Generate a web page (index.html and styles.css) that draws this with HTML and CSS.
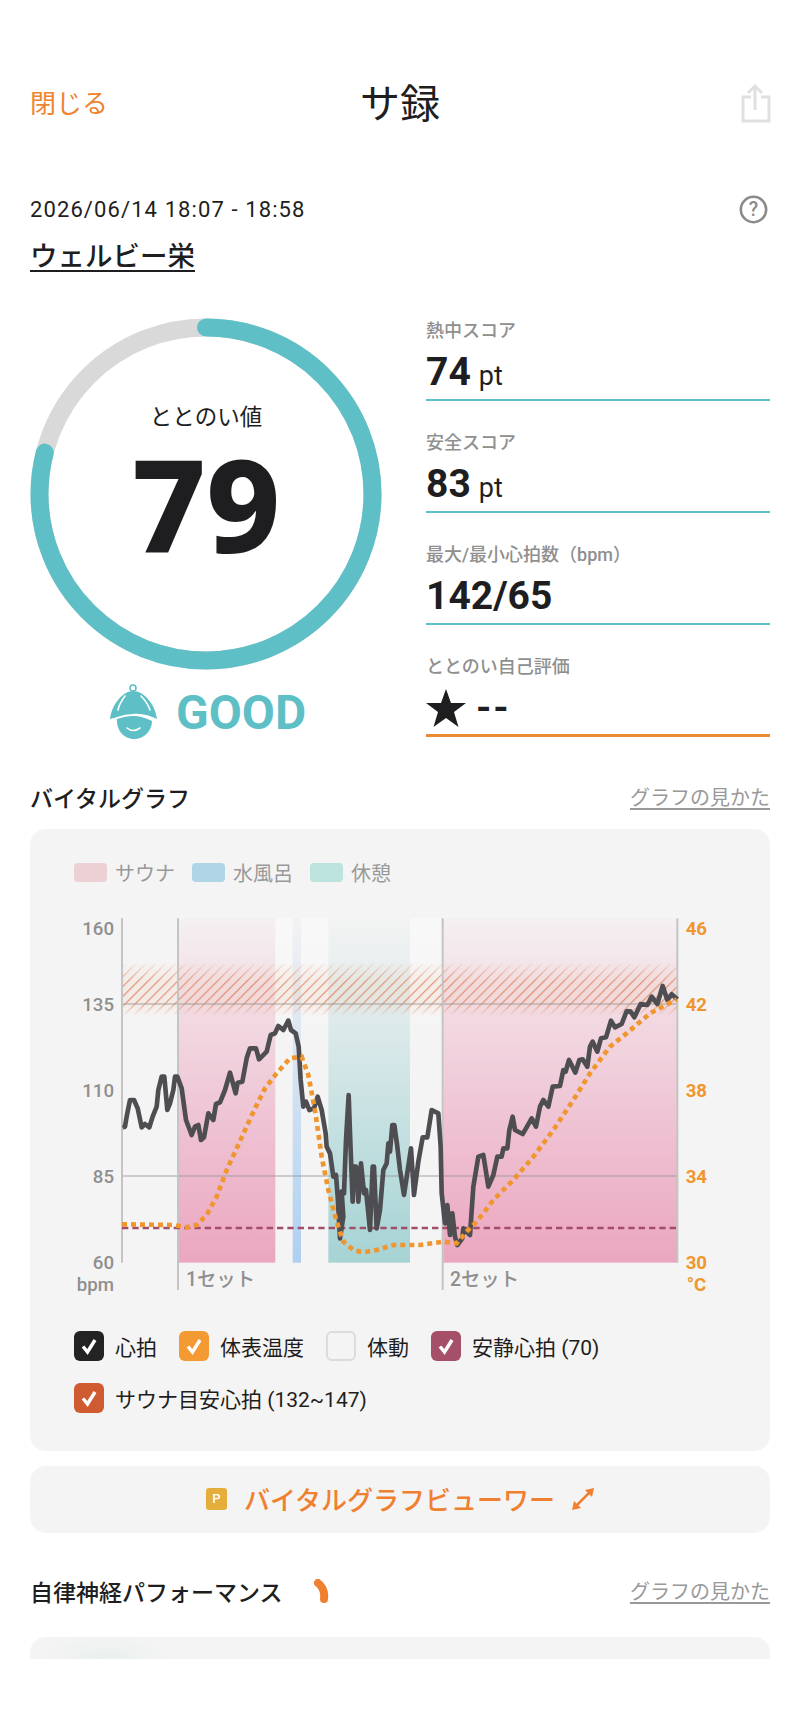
FILE: index.html
```html
<!DOCTYPE html>
<html lang="ja">

<head>
    <meta charset="UTF-8">
    <meta name="viewport" content="width=device-width, initial-scale=1.0">
    <title>サ録</title>
    <link rel="stylesheet" href="styles.css">
</head>

<body>
    <div class="topbar">
        <a class="close-link">閉じる</a>
        <h1>サ録</h1>
        <svg class="share-icon" viewBox="0 0 30 40">
            <path d="M10 14H2V38H28V14H20" />
            <path d="M14 27V3M7 10L14 3L21 10" />
        </svg>
    </div>

    <div class="date-row">
        <span>2026/06/14 18:07 - 18:58</span>
        <svg class="help-icon" viewBox="0 0 27 27">
            <circle cx="13.5" cy="13.5" r="11.8" />
            <text x="13.5" y="20">?</text>
        </svg>
    </div>
    <div class="venue">ウェルビー栄</div>

    <div class="score-row">
        <div class="ring-col">
            <div class="ring">
                <svg viewBox="0 0 352 352">
                    <circle class="ring-track" cx="176" cy="176" r="166.5" />
                    <circle class="ring-value" cx="176" cy="176" r="166.5" pathLength="100" stroke-dasharray="79 100" transform="rotate(-90 176 176)" />
                </svg>
                <div class="ring-label">ととのい値</div>
                <div class="ring-number">79</div>
            </div>
            <div class="grade">
                <svg class="grade-icon" viewBox="10 8 48 56">
                    <circle class="hat-loop" cx="33" cy="12" r="3" />
                    <path d="M10 43C12 28 23 15 33 15C44 15 55 28 57 43C50 40 42 37 33 38C25 38 18 41 10 43Z" />
                    <path d="M17 43C23 41 28 40 33 40C40 40 46 42 52 45C52 55 44 63 34 63C24 63 16 54 17 43Z" />
                    <path class="hat-line" d="M25 20C22 24 19 28 18 34M41 20C45 24 48 28 50 34" />
                    <path class="hat-line" d="M27 52Q33 57 40 52" />
                </svg>
                <span>GOOD</span>
            </div>
        </div>

        <div class="stats">
            <div class="stat">
                <div class="stat-label">熱中スコア</div>
                <div class="stat-value">74 <small>pt</small></div>
            </div>
            <div class="stat">
                <div class="stat-label">安全スコア</div>
                <div class="stat-value">83 <small>pt</small></div>
            </div>
            <div class="stat">
                <div class="stat-label">最大/最小心拍数（bpm）</div>
                <div class="stat-value">142/65</div>
            </div>
            <div class="stat stat-self">
                <div class="stat-label">ととのい自己評価</div>
                <div class="stat-value">
                    <svg class="star" viewBox="0 0 40 38">
                        <polygon points="20,0 25,14 40,14 28,23 32.5,38 20,29 7.5,38 12,23 0,14 15,14" />
                    </svg>
                    <span class="dashes">--</span>
                </div>
            </div>
        </div>
    </div>

    <div class="section-head">
        <h2>バイタルグラフ</h2>
        <a class="guide-link">グラフの見かた</a>
    </div>

    <div class="card graph-card">
        <div class="band-legend">
            <span class="swatch swatch-sauna"></span><span>サウナ</span>
            <span class="swatch swatch-water"></span><span>水風呂</span>
            <span class="swatch swatch-rest"></span><span>休憩</span>
        </div>

        <!-- viewBox is 3x the real pixels -->
        <svg class="chart" viewBox="0 0 1980 1200">
            <defs>
                <linearGradient id="saunaFill" x1="0" y1="0" x2="0" y2="1">
                    <stop offset="0" stop-color="#eba6c0" stop-opacity="0.05" />
                    <stop offset="0.3" stop-color="#eba6c0" stop-opacity="0.36" />
                    <stop offset="1" stop-color="#eba6c0" />
                </linearGradient>
                <linearGradient id="waterFill" x1="0" y1="0" x2="0" y2="1">
                    <stop offset="0" stop-color="#b0d0f0" stop-opacity="0.05" />
                    <stop offset="1" stop-color="#b0d0f0" />
                </linearGradient>
                <linearGradient id="restFill" x1="0" y1="0" x2="0" y2="1">
                    <stop offset="0" stop-color="#a6d3d4" stop-opacity="0.03" />
                    <stop offset="0.3" stop-color="#a6d3d4" stop-opacity="0.3" />
                    <stop offset="1" stop-color="#a6d3d4" />
                </linearGradient>
                <linearGradient id="gapFill" x1="0" y1="0" x2="0" y2="1">
                    <stop offset="0" stop-color="#ffffff" stop-opacity="0.4" />
                    <stop offset="1" stop-color="#ffffff" stop-opacity="0" />
                </linearGradient>
                <linearGradient id="hatchFade" x1="0" y1="0" x2="0" y2="1">
                    <stop offset="0" stop-color="#fff" stop-opacity="0.1" />
                    <stop offset="0.35" stop-color="#fff" />
                    <stop offset="0.75" stop-color="#fff" />
                    <stop offset="1" stop-color="#fff" stop-opacity="0.1" />
                </linearGradient>
                <pattern id="hatch" width="21" height="21" patternUnits="userSpaceOnUse" patternTransform="rotate(-45)">
                    <line x1="0" y1="2" x2="21" y2="2" class="hatch-line" />
                </pattern>
                <mask id="hatchMask">
                    <rect x="186" y="190" width="1666" height="155" fill="url(#hatchFade)" />
                </mask>
            </defs>

            <rect x="354" y="55" width="292" height="1033" fill="url(#saunaFill)" />
            <rect x="698" y="55" width="25" height="1033" fill="url(#waterFill)" />
            <rect x="805" y="55" width="245" height="1033" fill="url(#restFill)" />
            <rect x="1150" y="55" width="702" height="1033" fill="url(#saunaFill)" />
            <rect x="646" y="55" width="52" height="380" fill="url(#gapFill)" />
            <rect x="723" y="55" width="82" height="380" fill="url(#gapFill)" />
            <rect x="1050" y="55" width="100" height="380" fill="url(#gapFill)" />

            <g mask="url(#hatchMask)">
                <rect class="hatch-tint" x="186" y="190" width="1666" height="155" />
                <rect x="186" y="190" width="1666" height="155" fill="url(#hatch)" />
            </g>

            <path class="grid-line" d="M186 312H1852M186 828H1852" />
            <path class="axis-line" d="M186 55V1088M1852 55V1088M354 55V1170M1148 55V1170" />
            <path class="rest-line" d="M186 984H1852" />

            <polyline class="heart-line" points="188,683 195,680 200,650 210,600 222,600 233,625 245,682 255,672 268,682 278,650 290,620 295,570 305,530 313,530 322,630 330,610 340,570 345,530 352,530 365,565 378,660 395,705 405,680 415,675 423,720 432,712 445,640 460,660 468,612 480,607 495,570 510,518 527,580 533,548 547,545 560,475 570,445 588,445 597,478 620,455 632,405 645,400 655,378 670,390 685,362 693,390 707,400 716,440 722,540 730,620 738,605 748,630 762,625 773,590 785,630 797,700 800,740 810,760 820,830 828,825 833,890 840,1015 850,950 845,875 852,880 858,720 866,585 870,700 878,905 880,800 888,800 895,905 903,790 912,880 918,870 930,990 938,800 942,800 950,985 960,930 970,810 980,790 985,730 990,755 997,675 1003,675 1012,740 1020,810 1032,885 1053,745 1062,885 1075,785 1088,712 1102,712 1115,630 1135,640 1142,740 1145,880 1155,970 1162,915 1170,1005 1177,940 1185,1010 1192,1035 1207,1015 1210,985 1230,1005 1240,860 1255,770 1270,765 1285,860 1300,825 1312,770 1325,770 1330,745 1342,745 1348,690 1358,650 1365,690 1388,702 1398,685 1415,655 1428,680 1440,620 1450,600 1465,620 1478,560 1500,558 1510,510 1517,515 1527,480 1546,518 1558,480 1568,478 1582,500 1590,440 1598,425 1612,455 1623,415 1638,412 1653,362 1665,382 1685,372 1700,333 1712,335 1723,352 1742,312 1762,315 1775,290 1792,312 1808,258 1822,300 1835,283 1852,298" />
            <polyline class="temp-line" points="186,973 340,975 380,982 410,975 440,945 470,890 500,810 530,745 555,690 585,625 615,565 650,520 690,475 725,470 745,525 765,630 785,770 805,870 830,965 850,1025 880,1050 910,1057 950,1050 1000,1035 1080,1035 1150,1025 1190,1030 1220,995 1250,965 1300,900 1360,840 1420,770 1480,690 1540,600 1590,520 1650,440 1700,400 1770,340 1850,298" />

            <text class="tick" x="162" y="105">160</text>
            <text class="tick" x="162" y="332">135</text>
            <text class="tick" x="162" y="592">110</text>
            <text class="tick" x="162" y="850">85</text>
            <text class="tick" x="162" y="1108">60</text>
            <text class="tick" x="162" y="1172">bpm</text>
            <text class="tick-temp" x="1877" y="105">46</text>
            <text class="tick-temp" x="1877" y="332">42</text>
            <text class="tick-temp" x="1877" y="592">38</text>
            <text class="tick-temp" x="1877" y="850">34</text>
            <text class="tick-temp" x="1877" y="1108">30</text>
            <text class="tick-temp" x="1880" y="1172">°C</text>
            <text class="set-label" x="378" y="1158">1セット</text>
            <text class="set-label" x="1170" y="1158">2セット</text>
        </svg>

        <div class="toggles">
            <div class="toggle"><span class="check check-heart"><svg viewBox="0 0 30 30"><path d="M9 15.5L13.5 21L21 9" /></svg></span>心拍</div>
            <div class="toggle"><span class="check check-temp"><svg viewBox="0 0 30 30"><path d="M9 15.5L13.5 21L21 9" /></svg></span>体表温度</div>
            <div class="toggle"><span class="check check-off"></span>体動</div>
            <div class="toggle"><span class="check check-rest"><svg viewBox="0 0 30 30"><path d="M9 15.5L13.5 21L21 9" /></svg></span>安静心拍 (70)</div>
            <div class="toggle"><span class="check check-sauna"><svg viewBox="0 0 30 30"><path d="M9 15.5L13.5 21L21 9" /></svg></span>サウナ目安心拍 (132~147)</div>
        </div>
    </div>

    <div class="card viewer-btn">
        <span class="p-badge">P</span>
        <span>バイタルグラフビューワー</span>
        <svg class="expand-icon" viewBox="0 0 22 22">
            <path class="expand-shaft" d="M4 18L18 4" />
            <polygon points="22,0 13,2 20,9" />
            <polygon points="0,22 9,20 2,13" />
        </svg>
    </div>

    <div class="section-head section-nerve">
        <h2>自律神経パフォーマンス</h2>
        <svg class="spinner" viewBox="0 0 16 24">
            <path d="M4 4C9 8 11 13 10 20" />
        </svg>
        <a class="guide-link">グラフの見かた</a>
    </div>

    <div class="card next-card"></div>
</body>

</html>
```

FILE: styles.css
```css
* {
    margin: 0;
    padding: 0;
    box-sizing: border-box;
}

body {
    font-family: 'Roboto', 'Noto Sans CJK JP', sans-serif;
    background: #fff;
    color: #1e1e20;
    width: 800px;
    height: 1732px;
    padding: 0 30px;
    overflow: hidden;
}

.topbar {
    display: grid;
    grid-template-columns: 1fr auto 1fr;
    align-items: center;
    height: 56px;
    margin-top: 75px;
}

.close-link {
    padding-bottom: 4px;
    color: #ee8430;
    font-size: 26px;
}

.topbar h1 {
    padding-top: 4px;
    font-size: 40px;
    font-weight: 400;
    line-height: 52px;
}

.share-icon {
    justify-self: end;
    width: 30px;
    height: 40px;
    margin-right: -1px;
    fill: none;
    stroke: #e0e0e0;
    stroke-width: 3;
}

.date-row {
    display: flex;
    justify-content: space-between;
    align-items: center;
    height: 26px;
    margin-top: 65px;
    font-size: 22px;
    letter-spacing: 1.1px;
}

.help-icon {
    width: 29px;
    height: 29px;
    margin-right: 2px;
}

.help-icon circle {
    fill: none;
    stroke: #8a8a8a;
    stroke-width: 2.4;
}

.help-icon text {
    fill: #8a8a8a;
    font-size: 18px;
    font-weight: 500;
    text-anchor: middle;
    letter-spacing: 0;
}

.venue {
    margin-top: 17px;
    font-size: 27.5px;
    line-height: 36px;
    font-weight: 500;
    text-decoration: underline;
    text-underline-offset: 4px;
    text-decoration-thickness: 2px;
}

.score-row {
    display: flex;
    margin-top: 14px;
}

.ring-col {
    width: 352px;
    padding-top: 29px;
}

.ring {
    position: relative;
    width: 352px;
    height: 352px;
    text-align: center;
}

.ring svg {
    display: block;
    fill: none;
    stroke-width: 18;
}

.ring-track {
    stroke: #d9d9d9;
}

.ring-value {
    stroke: #5fbfc6;
    stroke-linecap: round;
}

.ring-label {
    position: absolute;
    top: 82px;
    left: 0;
    right: 0;
    font-size: 22.5px;
    line-height: 34px;
}

.ring-number {
    position: absolute;
    top: 130px;
    left: 0;
    right: 0;
    font-family: 'Noto Sans', sans-serif;
    font-size: 129px;
    font-weight: 800;
    line-height: 110px;
}

.grade {
    display: flex;
    align-items: center;
    gap: 18px;
    height: 56px;
    margin-top: 14px;
    padding-left: 80px;
    color: #5fbfc6;
    font-size: 48px;
    font-weight: 700;
}

.grade-icon {
    width: 48px;
    height: 56px;
    fill: #5fbfc6;
}

.hat-loop {
    fill: none;
    stroke: #5fbfc6;
    stroke-width: 1.6;
}

.hat-line {
    fill: none;
    stroke: #fff;
    stroke-width: 1.6;
    stroke-linecap: round;
}

.stats {
    width: 344px;
    margin-left: 44px;
}

.stat {
    height: 112px;
    padding-top: 30px;
    border-bottom: 2px solid #5fbfc6;
}

.stat-self {
    border-bottom: 3px solid #ea8a35;
}

.stat-label {
    color: #8f8f8f;
    font-size: 18px;
    font-weight: 500;
    line-height: 24px;
}

.stat-value {
    display: flex;
    align-items: baseline;
    gap: 8px;
    margin-top: 7px;
    font-size: 39px;
    font-weight: 700;
    line-height: 44px;
}

.stat-value small {
    font-size: 27px;
    font-weight: 400;
}

.stat-self .stat-value {
    align-items: center;
    gap: 10px;
}

.star {
    width: 40px;
    height: 38px;
    fill: #1e1e20;
}

.dashes {
    letter-spacing: 2px;
}

.section-head {
    display: flex;
    justify-content: space-between;
    align-items: center;
    height: 30px;
    margin-top: 43px;
    padding-bottom: 3px;
}

.section-head h2 {
    font-size: 23px;
    font-weight: 500;
}

.guide-link {
    color: #999;
    font-size: 20px;
    text-decoration: underline;
    text-underline-offset: 3px;
}

.card {
    background: #f5f4f4;
    border-radius: 16px;
}

.graph-card {
    margin-top: 16px;
    padding: 34px 0 38px 30px;
}

.band-legend {
    display: flex;
    align-items: center;
    height: 19px;
    padding-left: 14px;
    color: #999;
    font-size: 20px;
}

.swatch {
    width: 33px;
    height: 19px;
    border-radius: 4px;
    margin-right: 8px;
}

.swatch-water,
.swatch-rest {
    margin-left: 17px;
}

.swatch-sauna {
    background: #ecd0d3;
}

.swatch-water {
    background: #afd5e6;
}

.swatch-rest {
    background: #bce3de;
}

.chart {
    display: block;
    width: 660px;
    height: 400px;
    margin-top: 18px;
}

.hatch-line {
    stroke: #d9603a;
    stroke-width: 3;
    stroke-opacity: 0.75;
}

.hatch-tint {
    fill: #f0c8a8;
    fill-opacity: 0.18;
}

.grid-line {
    stroke: #9a9a9a;
    stroke-opacity: 0.6;
    stroke-width: 4;
    fill: none;
}

.axis-line {
    stroke: #c4c4c4;
    stroke-width: 6;
    fill: none;
}

.rest-line {
    stroke: #a44d6a;
    stroke-width: 7;
    stroke-dasharray: 19 12;
    fill: none;
}

.heart-line {
    fill: none;
    stroke: #4e4e52;
    stroke-width: 14;
    stroke-linejoin: round;
}

.temp-line {
    fill: none;
    stroke: #f0962f;
    stroke-width: 14;
    stroke-dasharray: 15 12;
}

.tick,
.tick-temp {
    font-size: 56px;
    font-weight: 500;
}

.tick {
    fill: #8f8f8f;
    text-anchor: end;
}

.tick-temp {
    fill: #f0962f;
    font-weight: 700;
}

.set-label {
    fill: #8f8f8f;
    font-size: 58px;
    font-weight: 500;
}

.toggles {
    display: flex;
    flex-wrap: wrap;
    gap: 22px;
    margin-top: 31px;
    padding-left: 14px;
}

.toggle {
    display: flex;
    align-items: center;
    gap: 11px;
    height: 30px;
    font-size: 21px;
}

.toggle:last-child {
    width: 100%;
}

.check {
    display: block;
    width: 30px;
    height: 30px;
    border-radius: 6px;
}

.check svg {
    display: block;
    fill: none;
    stroke: #fff;
    stroke-width: 3.4;
}

.check-heart {
    background: #232323;
}

.check-temp {
    background: #f39a32;
}

.check-off {
    border: 2.5px solid #dcdcdc;
}

.check-rest {
    background: #a64f68;
}

.check-sauna {
    background: #cf5b30;
}

.viewer-btn {
    display: flex;
    justify-content: center;
    align-items: center;
    gap: 17px;
    height: 67px;
    margin-top: 15px;
    padding-bottom: 2px;
    color: #ee8030;
    font-size: 26px;
    font-weight: 500;
}

.p-badge {
    width: 21px;
    height: 22px;
    border-radius: 3px;
    background: #e5ad3a;
    color: #fff;
    font-size: 13px;
    line-height: 22px;
    text-align: center;
}

.expand-icon {
    width: 22px;
    height: 22px;
    fill: #ee8030;
}

.expand-shaft {
    stroke: #ee8030;
    stroke-width: 2.5;
}

.section-nerve {
    justify-content: flex-start;
    margin-top: 44px;
}

.section-nerve .guide-link {
    margin-left: auto;
}

.spinner {
    width: 16px;
    height: 24px;
    margin-left: 31px;
    fill: none;
    stroke: #ee8030;
    stroke-width: 8;
    stroke-linecap: round;
}

.next-card {
    height: 22px;
    margin-top: 30px;
    border-radius: 16px 16px 0 0;
    background: radial-gradient(ellipse 70px 30px at 75px 24px, #e8f0ee, #f5f4f4);
}
```
